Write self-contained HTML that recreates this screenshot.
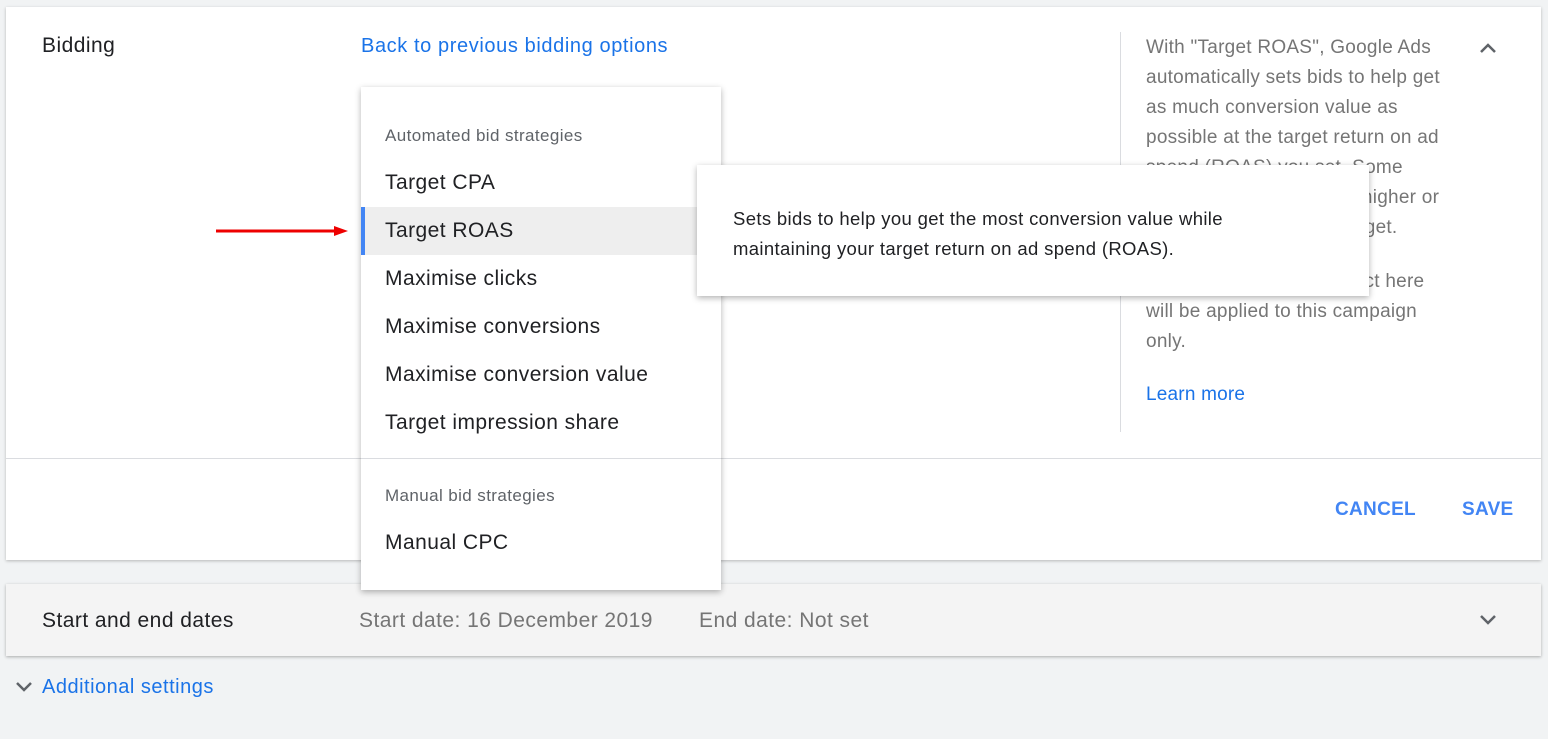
<!DOCTYPE html>
<html><head><style>
body{margin:0;width:1548px;height:739px;background:#f1f3f4;font-family:"Liberation Sans",sans-serif;position:relative;overflow:hidden}
.a{position:absolute;white-space:nowrap}
.card{position:absolute;left:6px;top:7px;width:1535px;height:553px;background:#fff;box-shadow:0 1px 3px rgba(0,0,0,.25)}
.menu{position:absolute;left:361px;top:87px;width:360px;height:503px;background:#fff;box-shadow:0 2px 6px rgba(0,0,0,.3)}
.item{position:absolute;left:24px;font-size:21px;letter-spacing:.45px;color:#202124}
.hdr{position:absolute;left:24px;font-size:17px;letter-spacing:.4px;color:#5f6368}
.help{font-size:19px;letter-spacing:.25px;color:#757575;line-height:30px}
.t{font-size:21px;letter-spacing:.45px}
</style></head><body>
<div class="card"></div>
<div class="a t" style="left:42px;top:34px;color:#202124">Bidding</div>
<div class="a" style="left:361px;top:35px;font-size:20px;letter-spacing:.6px;color:#1a73e8">Back to previous bidding options</div>
<div class="a" style="left:1120px;top:32px;width:1px;height:400px;background:#dadce0"></div>
<div class="a help" style="left:1146px;top:33px">With "Target ROAS", Google Ads<br>automatically sets bids to help get<br>as much conversion value as<br>possible at the target return on ad<br>spend (ROAS) you set. Some<br>conversions may have a higher or<br>lower return than your target.</div>
<div class="a help" style="left:1146px;top:267px">Any bid strategy you select here<br>will be applied to this campaign<br>only.</div>
<div class="a" style="left:1146px;top:384px;font-size:19px;letter-spacing:.2px;color:#1a73e8">Learn more</div>
<svg class="a" style="left:1478px;top:40px" width="20" height="16"><path d="M3 12 L10 5 L17 12" stroke="#5f6368" stroke-width="2.5" fill="none"/></svg>
<div class="a" style="left:6px;top:458px;width:1535px;height:1px;background:#dadce0"></div>
<div class="a" style="left:1335px;top:499px;font-size:19px;font-weight:bold;color:#4285f4;letter-spacing:.3px">CANCEL</div>
<div class="a" style="left:1462px;top:499px;font-size:19px;font-weight:bold;color:#4285f4;letter-spacing:.3px">SAVE</div>
<div class="a" style="left:6px;top:584px;width:1535px;height:72px;background:#f4f4f4;box-shadow:0 1px 3px rgba(0,0,0,.3)"></div>
<div class="a t" style="left:42px;top:609px;color:#202124">Start and end dates</div>
<div class="a t" style="left:359px;top:609px;color:#757575">Start date: 16 December 2019</div>
<div class="a t" style="left:699px;top:609px;color:#757575">End date: Not set</div>
<svg class="a" style="left:1478px;top:612px" width="20" height="16"><path d="M3 4 L10 11 L17 4" stroke="#5f6368" stroke-width="2.5" fill="none"/></svg>
<svg class="a" style="left:14px;top:680px" width="20" height="14"><path d="M3 3 L10 10 L17 3" stroke="#5f6368" stroke-width="2.5" fill="none"/></svg>
<div class="a" style="left:42px;top:676px;font-size:20px;letter-spacing:.5px;color:#1a73e8">Additional settings</div>
<div class="menu">
<div class="hdr" style="top:39px">Automated bid strategies</div>
<div class="item" style="top:84px">Target CPA</div>
<div class="a" style="left:0;top:120px;width:360px;height:48px;background:#eeeeee;border-left:4px solid #4285f4;box-sizing:border-box"></div>
<div class="item" style="top:132px">Target ROAS</div>
<div class="item" style="top:180px">Maximise clicks</div>
<div class="item" style="top:228px">Maximise conversions</div>
<div class="item" style="top:276px">Maximise conversion value</div>
<div class="item" style="top:324px">Target impression share</div>
<div class="a" style="left:0;top:371px;width:360px;height:1px;background:#dadce0"></div>
<div class="hdr" style="top:399px">Manual bid strategies</div>
<div class="item" style="top:444px">Manual CPC</div>
</div>
<svg class="a" style="left:214px;top:223px" width="135" height="16"><line x1="2" y1="8" x2="122" y2="8" stroke="#e00" stroke-width="3"/><path d="M120 3 L134 8 L120 13Z" fill="#e00"/></svg>
<div class="a" style="left:697px;top:165px;width:672px;height:131px;background:#fff;box-shadow:0 2px 6px rgba(0,0,0,.3)"></div>
<div class="a" style="left:733px;top:204px;font-size:18.5px;letter-spacing:.35px;color:#202124;line-height:30px">Sets bids to help you get the most conversion value while<br>maintaining your target return on ad spend (ROAS).</div>
</body></html>
